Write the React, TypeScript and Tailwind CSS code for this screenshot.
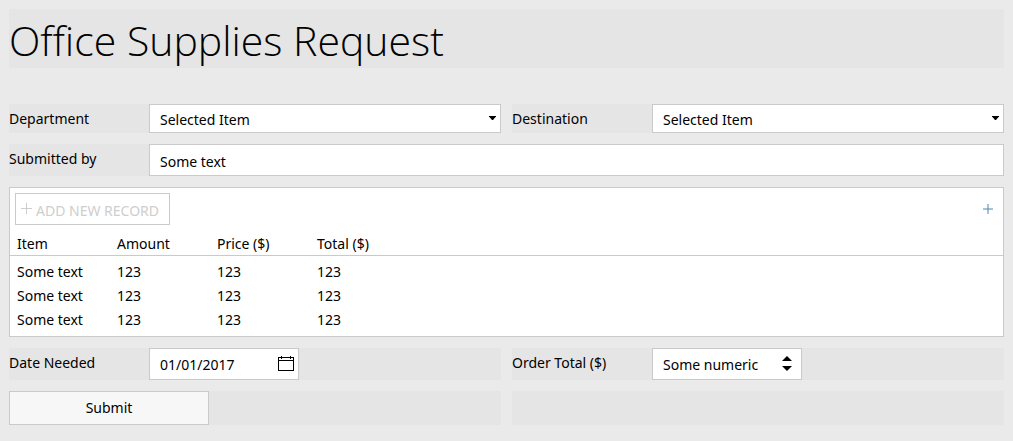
import { useId, useState } from "react";
import type { ReactNode } from "react";

const records = [
  { id: 1, item: "Some text", amount: "123", price: "123", total: "123" },
  { id: 2, item: "Some text", amount: "123", price: "123", total: "123" },
  { id: 3, item: "Some text", amount: "123", price: "123", total: "123" },
];

function FieldLabel({ htmlFor, children }: { htmlFor: string; children: ReactNode }) {
  return (
    <label htmlFor={htmlFor} className="w-[140px] shrink-0 self-stretch bg-[#e5e5e5] pt-[5px] leading-5">
      {children}
    </label>
  );
}

function SelectField({ label }: { label: string }) {
  const id = useId();
  return (
    <div className="flex h-[29px] min-w-0 flex-1">
      <FieldLabel htmlFor={id}>{label}</FieldLabel>
      <div className="grid min-w-0 flex-1 items-center border border-[#cacaca] bg-white">
        <select
          id={id}
          className="col-start-1 row-start-1 h-full w-full appearance-none bg-transparent px-[10px] pt-[2px]"
        >
          <option>Selected Item</option>
        </select>
        <svg
          viewBox="0 0 7 4"
          aria-hidden="true"
          className="pointer-events-none col-start-1 row-start-1 mr-1 mb-[2px] h-1 w-[7px] justify-self-end"
        >
          <path d="M0 0h7v.5L4 4H3L0 .5z" fill="#000" />
        </svg>
      </div>
    </div>
  );
}

function CalendarIcon() {
  return (
    <svg viewBox="0 0 16 15" aria-hidden="true" className="h-[15px] w-4" fill="none" stroke="#000" shapeRendering="crispEdges">
      <path d="M.5 1.5h15v13H.5zM0 4.5h16M3.5 0v3M12.5 0v3" />
    </svg>
  );
}

export default function App() {
  const [name, setName] = useState("Some text");
  const [date, setDate] = useState("01/01/2017");
  const [total, setTotal] = useState("Some numeric");

  return (
    <div className="min-h-screen bg-[#eaeaea] p-[9px] pb-4 font-['Segoe_UI','Noto_Sans',sans-serif] text-[14px] text-black">
      <h1 className="mb-9 h-[59px] bg-[#e5e5e5] pt-[2px] font-['Open_Sans',sans-serif] text-[41px] leading-[59px] font-light">
        Office Supplies Request
      </h1>

      <form className="flex flex-col gap-[11px]" onSubmit={(e) => e.preventDefault()}>
        <div className="flex gap-[11px]">
          <SelectField label="Department" />
          <SelectField label="Destination" />
        </div>

        <div className="flex h-8">
          <FieldLabel htmlFor="submitted">Submitted by</FieldLabel>
          <input
            id="submitted"
            value={name}
            onChange={(e) => setName(e.target.value)}
            className="min-w-0 flex-1 border border-[#cacaca] bg-white px-[10px] pt-[2px]"
          />
        </div>

        <section aria-label="Records" className="border border-[#cacaca] bg-white pt-[5px] pb-1">
          <div className="flex items-center justify-between pr-[10px] pl-[5px]">
            <button
              type="button"
              disabled
              className="flex h-8 w-[155px] items-center gap-1 border border-[#cacaca] pl-[5px] whitespace-nowrap text-[#cecece]"
            >
              <svg viewBox="0 0 11 11" aria-hidden="true" className="mb-[2px] h-[11px] w-[11px] shrink-0">
                <path d="M5.5 0v11M0 5.5h11" stroke="#cecece" />
              </svg>
              <span className="pt-[2px]">ADD NEW RECORD</span>
            </button>
            <button type="button" aria-label="Add a record">
              <svg viewBox="0 0 10 10" aria-hidden="true" className="h-[10px] w-[10px]">
                <path d="M5 0v10M0 5h10" stroke="#4b87b3" />
              </svg>
            </button>
          </div>
          <table className="w-full table-fixed border-collapse text-left">
            <colgroup>
              <col className="w-[107px]" />
              <col className="w-[100px]" />
              <col className="w-[100px]" />
              <col />
            </colgroup>
            <thead>
              <tr className="h-[30px] border-b border-[#cacaca] align-bottom leading-[22px]">
                <th scope="col" className="pl-[7px] font-normal">Item</th>
                <th scope="col" className="font-normal">Amount</th>
                <th scope="col" className="font-normal">Price ($)</th>
                <th scope="col" className="font-normal">Total ($)</th>
              </tr>
            </thead>
            <tbody className="before:block before:h-1">
              {records.map((r) => (
                <tr key={r.id} className="h-6 leading-6">
                  <td className="pl-[7px]">{r.item}</td>
                  <td>{r.amount}</td>
                  <td>{r.price}</td>
                  <td>{r.total}</td>
                </tr>
              ))}
            </tbody>
          </table>
        </section>

        <div className="flex gap-[11px]">
          <div className="flex h-8 min-w-0 flex-1 bg-[#e5e5e5]">
            <FieldLabel htmlFor="needed">Date Needed</FieldLabel>
            <div className="flex w-[150px] items-center border border-[#cacaca] bg-white pr-1 pl-[10px]">
              <input
                id="needed"
                value={date}
                onChange={(e) => setDate(e.target.value)}
                className="h-full min-w-0 flex-1 pt-[2px]"
              />
              <button type="button" aria-label="Open calendar">
                <CalendarIcon />
              </button>
            </div>
          </div>
          <div className="flex h-8 min-w-0 flex-1 bg-[#e5e5e5]">
            <FieldLabel htmlFor="total">Order Total ($)</FieldLabel>
            <div className="flex w-[150px] items-center border border-[#cacaca] bg-white pr-[9px] pl-[10px]">
              <input
                id="total"
                value={total}
                onChange={(e) => setTotal(e.target.value)}
                className="h-full min-w-0 flex-1 pt-[2px]"
              />
              <div className="flex flex-col gap-[5px]">
                <button type="button" aria-label="Increase">
                  <svg viewBox="0 0 10 5" aria-hidden="true" className="h-[5px] w-[10px]">
                    <path d="M0 5L5 0l5 5z" />
                  </svg>
                </button>
                <button type="button" aria-label="Decrease">
                  <svg viewBox="0 0 10 5" aria-hidden="true" className="h-[5px] w-[10px]">
                    <path d="M0 0h10L5 5z" />
                  </svg>
                </button>
              </div>
            </div>
          </div>
        </div>

        <div className="flex gap-[11px]">
          <div className="h-[34px] flex-1 bg-[#e5e5e5]">
            <button type="submit" className="h-full w-[200px] border border-[#cacaca] bg-[#f7f7f7]">
              Submit
            </button>
          </div>
          <div className="h-[34px] flex-1 bg-[#e5e5e5]" />
        </div>
      </form>
    </div>
  );
}
